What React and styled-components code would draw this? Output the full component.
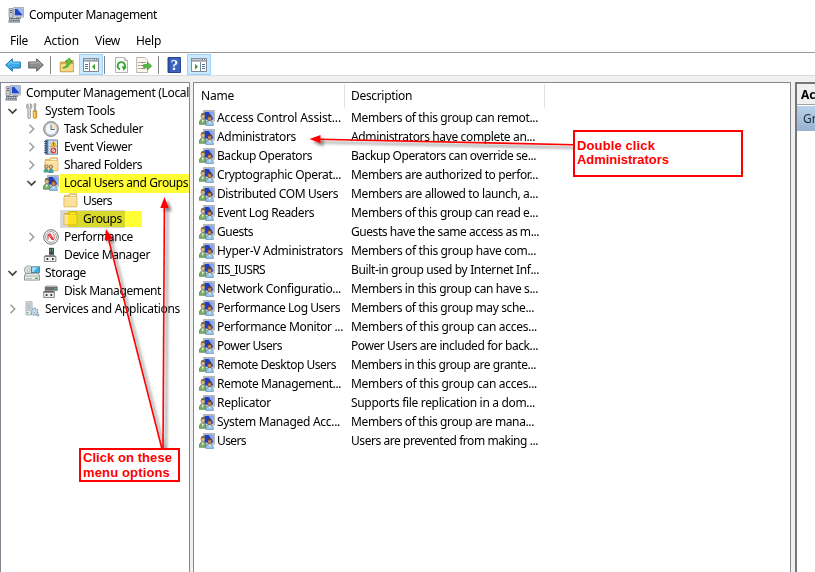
import React, { useLayoutEffect, useRef, useState } from 'react';
import styled, { createGlobalStyle } from 'styled-components';

const Global = createGlobalStyle`
  body { margin: 0; background: #fff; overflow: hidden; }
  * { box-sizing: border-box; }
`;

const Window = styled.div`
  position: relative;
  width: 815px;
  height: 572px;
  overflow: hidden;
  display: flex;
  flex-direction: column;
  background: #fff;
  color: #000;
  font: 12px/18px 'Noto Sans', 'Open Sans', sans-serif;
`;

const TitleBar = styled.header`
  display: flex;
  align-items: center;
  gap: 5px;
  height: 30px;
  padding-left: 8px;
`;

const MenuBar = styled.nav`
  display: flex;
  gap: 16px;
  height: 22px;
  padding: 2px 0 0 10px;
`;

const Toolbar = styled.div`
  display: flex;
  align-items: flex-start;
  height: 23px;
  padding: 1px 0 0 5px;
  border-top: 1px solid #9a9a9a;
`;

const Tool = styled.span`
  display: flex;
  align-items: flex-start;
  justify-content: center;
  flex: none;
  width: ${(p) => (p.$active ? 24 : 16)}px;
  height: 21px;
  padding-top: ${(p) => (p.$active ? 2 : 3)}px;
  margin-left: ${(p) => p.$gap || 0}px;
  background: ${(p) => (p.$active ? '#cce8ff' : 'transparent')};
  border: ${(p) => (p.$active ? '1px solid #99d1ff' : '0')};
`;

const Separator = styled.span`
  width: 1px;
  height: 18px;
  margin: 2px 0 0 ${(p) => p.$gap}px;
  background: #858585;
`;

const Workspace = styled.main`
  display: flex;
  flex: 1;
  min-height: 0;
  padding-top: 6px;
  background: #f0f0f0;
  border-top: 1px solid #dcdcdc;
`;

const TreePane = styled.section`
  width: 190px;
  flex: none;
  padding-top: 1px;
  overflow: hidden;
  background: #fff;
  border: 1px solid #828790;
  border-bottom: 0;
`;

const TreeRow = styled.div`
  display: flex;
  align-items: center;
  height: 18px;
  padding-left: ${(p) => p.$indent}px;
  white-space: nowrap;
  background: ${(p) => (p.$selected ? 'linear-gradient(#d9d9d9, #d9d9d9) 59px 0 / 65px 18px no-repeat' : 'none')};
`;

const Chevron = styled.span`
  display: flex;
  align-items: center;
  width: 17px;
  flex: none;
`;

const TreeLabel = styled.span`
  display: flex;
  align-items: center;
  height: 18px;
  margin-left: 5px;
`;

const ListPane = styled.section`
  width: 598px;
  flex: none;
  margin-left: 3px;
  background: #fff;
  border: 1px solid #828790;
  border-bottom: 0;
`;

const ListHeader = styled.div`
  display: grid;
  grid-template-columns: 151px 200px;
  height: 25px;
  padding-top: 1px;
`;

const HeaderCell = styled.div`
  display: flex;
  align-items: center;
  padding-left: ${(p) => p.$pad}px;
  border-right: 1px solid #e2e2e2;
`;

const ListRow = styled.div`
  display: grid;
  grid-template-columns: 18px 134px 200px;
  align-items: center;
  justify-items: start;
  height: 19px;
  padding-left: 5px;
  white-space: nowrap;
`;

const ActionsPane = styled.aside`
  flex: 1;
  min-width: 0;
  margin-left: 4px;
  overflow: hidden;
  background: #fff;
  border-top: 2px solid #767676;
  border-left: 2px solid #767676;
  white-space: nowrap;
`;

const ActionsTitle = styled.div`
  height: 21px;
  padding: 2px 0 0 4px;
  overflow: hidden;
  background: #f0f0f0;
  border-bottom: 1px solid #a0a0a0;
  font-weight: 700;
`;

const ActionsItem = styled.div`
  height: 25px;
  margin-top: 1px;
  padding: 4px 0 0 6px;
  overflow: hidden;
  color: #1e2a3c;
  background: linear-gradient(#b9d1ea, #98b1cf);
`;

const Highlight = styled.div`
  position: absolute;
  left: ${(p) => p.$x}px;
  top: ${(p) => p.$y}px;
  width: ${(p) => p.$w}px;
  height: ${(p) => p.$h}px;
  background: #ffff33;
  mix-blend-mode: multiply;
`;

const Arrows = styled.svg`
  position: absolute;
  left: 0;
  top: 0;
  pointer-events: none;
`;

const Callout = styled.div`
  position: absolute;
  left: ${(p) => p.$x}px;
  top: ${(p) => p.$y}px;
  width: ${(p) => p.$w}px;
  height: ${(p) => p.$h}px;
  padding: ${(p) => p.$pad};
  display: flex;
  flex-direction: column;
  align-items: flex-start;
  background: #fff;
  border: 2px solid #f00;
  color: #f00;
  font: bold 13px/${(p) => p.$line}px 'Liberation Sans', sans-serif;
  white-space: nowrap;
`;

const Run = styled.span`
  display: inline-block;
  white-space: pre;
`;

// Tracks the text so that it occupies exactly the given advance width.
function Fit({ w, children }) {
  const ref = useRef(null);
  const [spacing, setSpacing] = useState(0);
  useLayoutEffect(() => {
    const natural = ref.current.getBoundingClientRect().width;
    setSpacing((w - natural) / children.length);
  }, []);
  return <Run ref={ref} style={{ letterSpacing: spacing }}>{children}</Run>;
}

const Glyph = ({ children }) => (
  <svg width="16" height="16" viewBox="0 0 16 16">{children}</svg>
);

const ComputerIcon = () => (
  <Glyph>
    <path d="M5.5.5h10v9.6h-10z" fill="#d5d9df" stroke="#9aa1ab" strokeWidth=".8" />
    <path d="M6.8 1.8h7.5v6.6H6.8z" fill="#2346c8" />
    <path d="M9 1.8h5.3v6z" fill="#9dc0f7" />
    <path d="M1 1.5h3.8v9H1z" fill="#c5cad1" stroke="#868d97" strokeWidth=".7" />
    <path d="M2 3.5h2M2 5.5h2" stroke="#5d6570" />
    <path d="M8 10.2h5v1.8H8z" fill="#9299a3" />
    <path d="M1.2 11h10l.9 4.5H.3z" fill="#6b737e" />
    <path d="M1.8 12.5h9M1.3 14.2h10" stroke="#d6d9de" strokeDasharray="1.5 .8" />
  </Glyph>
);

const UsersIcon = () => (
  <Glyph>
    <path d="M4.4.5h11.1v10.8H4.4z" fill="#d0d0cc" stroke="#aaaaa4" strokeWidth=".8" />
    <path d="M5.5 1.8h8.7v7.8H5.5z" fill="#1c3dc8" />
    <path d="M9.5 1.8h4.7v7z" fill="#86a6ef" />
    <path d="M.3 14.3c-.1-3.6 1-5.2 3.3-5.2s3.5 1.6 3.4 5.2z" fill="#7bb06a" stroke="#3c6b34" strokeWidth=".6" />
    <path d="M2.6 9.4l1.2 3.4L5 9.4z" fill="#e8f3e2" />
    <ellipse cx="4" cy="6.3" rx="2" ry="2.6" fill="#dcb98c" stroke="#6c5a38" strokeWidth=".6" />
    <path d="M1.9 5.6C1.9 3 3.2 2.7 4.4 3c1.4 0 2 1.2 1.8 2.5C5 4.7 3 4.6 1.9 5.6z" fill="#7a673c" />
    <path d="M6.9 15.6c-.1-3.2 1.1-4.7 3.7-4.7s3.9 1.5 3.8 4.7z" fill="#9ac6ea" stroke="#4978a5" strokeWidth=".6" />
    <path d="M9.5 11l1.2 3 1.2-3z" fill="#f2f8fd" />
    <ellipse cx="10.6" cy="8.4" rx="2.1" ry="2.6" fill="#c18a5c" stroke="#5a3a20" strokeWidth=".6" />
    <path d="M8.5 7.7C8.4 5.4 9.7 5 10.8 5.2c1.4.1 2.1 1.1 1.9 2.4-1.2-.8-3-.8-4.2.1z" fill="#6a4225" />
  </Glyph>
);

const ToolsIcon = () => (
  <Glyph>
    <path d="M4 .8v3.5l1.2 1 1.2-1V.8c1.7.9 2.1 4-.1 5.6v8c0 1.5-2.3 1.5-2.3 0v-8C1.8 4.8 2.2 1.7 4 .8z" fill="#eceeef" stroke="#707678" strokeWidth=".8" />
    <path d="M10 .8h1.8l-.2 3.2v4h-1.3V4z" fill="#e3e6e8" stroke="#777d80" strokeWidth=".7" />
    <path d="M9.2 8h3.5v6.2c0 1.6-3.5 1.6-3.5 0z" fill="#f0ad13" stroke="#b97908" strokeWidth=".7" />
    <path d="M10.4 9v5.5" stroke="#ffe188" />
  </Glyph>
);

const ClockIcon = () => (
  <Glyph>
    <circle cx="8" cy="8" r="7.4" fill="#c6cacd" stroke="#74787b" strokeWidth=".9" />
    <circle cx="8" cy="8" r="5.9" fill="#f3f7fb" stroke="#9aa0a5" strokeWidth=".5" />
    <path d="M8 8V2.3A5.7 5.7 0 0 1 13.7 8z" fill="#f6e4b8" />
    <path d="M8 3.8V8.5h3.7" fill="none" stroke="#5a6c82" />
  </Glyph>
);

const EventIcon = () => (
  <Glyph>
    <path d="M2.5 1h12v14.2h-12z" fill="#d5e3f2" stroke="#6580a3" />
    <path d="M2.5 1h2.8v14.2H2.5z" fill="#5277ab" />
    <path d="M1 2.5h3M1 4.7h3M1 6.9h3M1 9.1h3M1 11.3h3M1 13.5h3" stroke="#2d4665" strokeWidth=".8" />
    <path d="M6.5 4h2M6.5 7h1M6.5 10h1M6.5 13h2" stroke="#7b98bd" strokeWidth=".8" />
    <path d="M10.6 2l3 5.5h-6z" fill="#ffd42a" stroke="#c28d0b" strokeWidth=".6" />
    <path d="M10.6 4v1.8M10.6 6.3v.6" stroke="#222" strokeWidth=".8" />
    <circle cx="10.4" cy="11.4" r="2.3" fill="#fbe6e3" stroke="#dd3b2e" strokeWidth="1.2" />
    <path d="M9 12.8l2.8-2.8" stroke="#dd3b2e" />
  </Glyph>
);

const FolderIcon = ({ shared }) => (
  <Glyph>
    <path d="M2.4 2.4h3.8l1.4-1.6h6.9v12.7H2.4z" fill="#eec568" stroke="#cfa349" strokeWidth=".7" />
    <path d="M8.3 1.8h5.2v1.6H8.3z" fill="#fffaea" />
    <path d="M2 3.9h13v10H2z" fill="#fbe29a" stroke="#d8ae52" strokeWidth=".7" />
    <path d="M2.5 4.6h12" stroke="#fff4cc" strokeWidth=".8" />
    {shared && (
      <g>
        <path d="M.6 15.6c0-2.8.8-4 2.5-4s2.5 1.2 2.5 4z" fill="#4ba38a" />
        <path d="M5.4 15.9c0-2.8.9-4.1 2.6-4.1s2.6 1.3 2.6 4.1z" fill="#3e9cae" />
        <circle cx="3.4" cy="9.6" r="1.7" fill="#e9c39c" stroke="#5b4a33" strokeWidth=".7" />
        <circle cx="7.9" cy="9.8" r="1.7" fill="#e9c39c" stroke="#5b4a33" strokeWidth=".7" />
      </g>
    )}
  </Glyph>
);

const GaugeIcon = () => (
  <Glyph>
    <circle cx="8" cy="8" r="7.3" fill="#f7f7f7" stroke="#747474" />
    <circle cx="8" cy="8" r="5.4" fill="#fff" stroke="#888" strokeWidth=".8" />
    <path d="M5 10.5V6l2-1.3 3.6 6.2M6 6.2l3.4 4.8" fill="none" stroke="#d3262b" strokeWidth="1.1" />
    <path d="M9.5 4.8l1.7 1.4v3.5" fill="none" stroke="#c33" strokeWidth=".8" />
  </Glyph>
);

const DeviceIcon = () => (
  <Glyph>
    <path d="M6 .8h5v7H6z" fill="#43474a" />
    <path d="M7.3 2v3" stroke="#7b8388" />
    <path d="M9.6 1.5v3" stroke="#35d15c" strokeWidth=".8" />
    <path d="M2.2 8h9.6l.9 2H1.3z" fill="#8b8f92" />
    <path d="M1.3 9.5h11.6v5H1.3z" fill="#eceded" stroke="#6b6f72" strokeWidth=".8" />
    <path d="M3.6 11h1.6v2H3.6zM9 11h1.6v2H9z" fill="#333" />
  </Glyph>
);

const DiskIcon = () => (
  <Glyph>
    <path d="M3 2.7h10.5l1.2 1.8v3.3H1.8V4.5z" fill="#6b6f72" />
    <path d="M3.2 3.3h10" stroke="#c5c9cc" />
    <path d="M11.4 5h2v1.2h-2z" fill="#35d15c" />
    <path d="M.7 8.7h10.6v5.8H.7z" fill="#eceded" stroke="#6b6f72" strokeWidth=".8" />
    <path d="M.7 8.2h10.6v1.4H.7z" fill="#55595c" />
    <path d="M2.8 11h1.6v2H2.8zM7.5 11h1.6v2H7.5z" fill="#333" />
  </Glyph>
);

const StorageIcon = () => (
  <Glyph>
    <circle cx="4.6" cy="5" r="4.1" fill="#d5e3dd" stroke="#859397" strokeWidth=".8" />
    <circle cx="4.6" cy="5" r="1.3" fill="#fff" stroke="#7b8a8e" strokeWidth=".5" />
    <path d="M7.5 1.8h8.1v5.8H7.5z" fill="#3faee0" stroke="#376d91" strokeWidth=".8" />
    <path d="M8 2.3h5.5L9.5 7H8z" fill="#a5ddf5" />
    <path d="M1.5 8.3h13l1 2.8v4H.5v-4z" fill="#eceded" stroke="#757c7e" strokeWidth=".8" />
    <path d="M1 11h14" stroke="#a6acae" />
    <path d="M11 12.6h3v1.4h-3z" fill="#36c43c" />
    <path d="M2 13.4h6" stroke="#b6bcbe" />
  </Glyph>
);

const ServicesIcon = () => (
  <Glyph>
    <path d="M2 .8h6v13H2z" fill="#e9eef0" stroke="#919ea5" strokeWidth=".8" />
    <path d="M3 3h4M3 5h4M3 7h4M3 9h3" stroke="#8b9ea9" />
    <path d="M3 11.7h1.6" stroke="#41a648" />
    <circle cx="10.3" cy="10.6" r="3.4" fill="#c6daea" stroke="#7c98ae" strokeWidth="1.4" strokeDasharray="1.6 1" />
    <circle cx="10.3" cy="10.6" r="2.7" fill="#c6daea" />
    <circle cx="10.3" cy="10.6" r="1.2" fill="#fff" stroke="#7c98ae" strokeWidth=".6" />
    <circle cx="13.9" cy="14" r="1.3" fill="#b0c8da" stroke="#7c98ae" strokeWidth=".5" />
  </Glyph>
);

const ArrowIcon = ({ back }) => (
  <Glyph>
    <path
      d={back ? 'M.7 8L7.3 1.8V5h8v6h-8v3.2z' : 'M15.3 8L8.7 1.8V5h-8v6h8v3.2z'}
      fill={back ? '#39ade9' : '#8b8d8e'}
      stroke={back ? '#1773ad' : '#5d5f60'}
      strokeLinejoin="round"
    />
    <path d={back ? 'M3 7.5l3.5-3.2V6h8' : 'M1.5 6h8V4.3L13 7.5'} fill="none" stroke={back ? '#8bd8fa' : '#b9bbbc'} />
  </Glyph>
);

const UpFolderIcon = () => (
  <Glyph>
    <path d="M1.3 5h4.5L7 3.5h7.3v11.2h-13z" fill="#e4b853" stroke="#b68c35" strokeWidth=".7" />
    <path d="M1.3 6.5h13.2v8.2H1.3z" fill="#f7d886" stroke="#c79d42" strokeWidth=".7" />
    <path d="M3.5 11C6.8 9.8 8 8 8.4 5L6 4.7 10.3 1l3 4.4-2.2-.2c-.4 3.8-3 6-7.6 5.8z" fill="#5cc83f" stroke="#2c851d" strokeWidth=".6" />
  </Glyph>
);

const PaneIcon = ({ right }) => (
  <Glyph>
    <path d="M.5 1.5h15v13H.5z" fill="#fff" stroke="#7e8994" />
    <path d="M0 1h16v4H0z" fill="#7e8994" />
    <path d="M1 2.4h10M1 4.2h14" stroke="#e8eef2" strokeWidth=".8" />
    <path d="M12 2.4h1M14 2.4h1" stroke="#fff" />
    <path d={right ? 'M9.5 5v9' : 'M6.5 5v9'} stroke="#7e8994" />
    <path d={right ? 'M11 7.5h3M11 9.5h3M11 11.5h3' : 'M2 7.5h3M2 9.5h3M2 11.5h3'} stroke="#4e7597" />
    <path d={right ? 'M4 6.8v6l3-3z' : 'M12 6.8v6l-3-3z'} fill="#34a52d" />
  </Glyph>
);

const RefreshIcon = () => (
  <Glyph>
    <path d="M1.5.5h9l3 3v12h-12z" fill="#fafafa" stroke="#a1a1a1" strokeWidth=".8" />
    <path d="M10.5.5v3h3" fill="#ddd" stroke="#a1a1a1" strokeWidth=".7" />
    <path d="M6 12.3a3.7 3.7 0 1 1 4.7-2" fill="none" stroke="#36a52d" strokeWidth="1.9" />
    <path d="M7.8 9l5 .9-3.2 3.8z" fill="#36a52d" />
  </Glyph>
);

const ExportIcon = () => (
  <Glyph>
    <path d="M.7.5h8l3 3v12h-11z" fill="#fdf8e7" stroke="#a1a1a1" strokeWidth=".8" />
    <path d="M2.5 5.5h1M2.5 8.5h1M2.5 11.5h1" stroke="#555" />
    <path d="M4.5 5.5h5M4.5 8.5h3M4.5 11.5h5" stroke="#8a8a8a" />
    <path d="M7.5 7.6h3.8V5l4.4 4-4.4 4v-2.6H7.5z" fill="#51bd3f" stroke="#308a23" strokeWidth=".6" />
  </Glyph>
);

const HelpText = styled.text`
  font: bold 15px 'Liberation Serif', serif;
  fill: #fff;
`;

const HelpIcon = () => (
  <Glyph>
    <path d="M2 .5h12.5v15H2z" fill="#3b63bd" stroke="#27458e" />
    <path d="M3 1v14" stroke="#26418a" />
    <HelpText x="4.8" y="13">?</HelpText>
  </Glyph>
);

const Twisty = ({ open }) => (
  <svg width="10" height="10" viewBox="0 0 10 10">
    <path
      d={open ? 'M1.5 3l4 4 4-4' : 'M3.5 .8L7.7 5 3.5 9.2'}
      fill="none"
      stroke={open ? '#404040' : '#a0a0a0'}
      strokeWidth="1.6"
    />
  </svg>
);

const tree = [
  { Icon: ComputerIcon, label: 'Computer Management (Local', w: 163, indent: 4, leaf: true },
  { Icon: ToolsIcon, label: 'System Tools', w: 70, indent: 6, open: true },
  { Icon: ClockIcon, label: 'Task Scheduler', w: 79, indent: 25 },
  { Icon: EventIcon, label: 'Event Viewer', w: 68, indent: 25 },
  { Icon: FolderIcon, shared: true, label: 'Shared Folders', w: 78, indent: 25 },
  { Icon: UsersIcon, label: 'Local Users and Groups', w: 124, indent: 25, open: true },
  { Icon: FolderIcon, label: 'Users', w: 29, indent: 61, leaf: true },
  { Icon: FolderIcon, label: 'Groups', w: 39, indent: 61, leaf: true, selected: true },
  { Icon: GaugeIcon, label: 'Performance', w: 69, indent: 25 },
  { Icon: DeviceIcon, label: 'Device Manager', w: 86, indent: 42, leaf: true },
  { Icon: StorageIcon, label: 'Storage', w: 41, indent: 6, open: true },
  { Icon: DiskIcon, label: 'Disk Management', w: 97, indent: 42, leaf: true },
  { Icon: ServicesIcon, label: 'Services and Applications', w: 135, indent: 6 },
];

const groups = [
  ['Access Control Assist...', 124, 'Members of this group can remot...', 187],
  ['Administrators', 79, 'Administrators have complete an...', 184],
  ['Backup Operators', 95, 'Backup Operators can override se...', 185],
  ['Cryptographic Operat...', 124, 'Members are authorized to perfor...', 187],
  ['Distributed COM Users', 121, 'Members are allowed to launch, a...', 187],
  ['Event Log Readers', 97, 'Members of this group can read e...', 187],
  ['Guests', 36, 'Guests have the same access as m...', 188],
  ['Hyper-V Administrators', 126, 'Members of this group have com...', 185],
  ['IIS_IUSRS', 48, 'Built-in group used by Internet Inf...', 188],
  ['Network Configuratio...', 124, 'Members in this group can have s...', 187],
  ['Performance Log Users', 123, 'Members of this group may sche...', 183],
  ['Performance Monitor ...', 126, 'Members of this group can acces...', 186],
  ['Power Users', 65, 'Power Users are included for back...', 187],
  ['Remote Desktop Users', 119, 'Members in this group are grante...', 185],
  ['Remote Management...', 124, 'Members of this group can acces...', 186],
  ['Replicator', 54, 'Supports file replication in a dom...', 184],
  ['System Managed Acc...', 123, 'Members of this group are mana...', 183],
  ['Users', 29, 'Users are prevented from making ...', 187],
];

export default function App() {
  return (
    <Window>
      <Global />
      <TitleBar>
        <ComputerIcon />
        <Fit w={128}>Computer Management</Fit>
      </TitleBar>
      <MenuBar>
        <Fit w={18}>File</Fit>
        <Fit w={35}>Action</Fit>
        <Fit w={25}>View</Fit>
        <Fit w={25}>Help</Fit>
      </MenuBar>
      <Toolbar>
        <Tool><ArrowIcon back /></Tool>
        <Tool $gap={7}><ArrowIcon /></Tool>
        <Separator $gap={6} />
        <Tool $gap={8}><UpFolderIcon /></Tool>
        <Tool $active $gap={4}><PaneIcon /></Tool>
        <Separator $gap={1} />
        <Tool $gap={9}><RefreshIcon /></Tool>
        <Tool $gap={6}><ExportIcon /></Tool>
        <Separator $gap={6} />
        <Tool $gap={7}><HelpIcon /></Tool>
        <Tool $active $gap={5}><PaneIcon right /></Tool>
      </Toolbar>
      <Workspace>
        <TreePane>
          {tree.map(({ Icon, label, w, indent, leaf, open, shared, selected }) => (
            <TreeRow key={label} $indent={indent} $selected={selected}>
              {!leaf && <Chevron><Twisty open={open} /></Chevron>}
              <Icon shared={shared} />
              <TreeLabel><Fit w={w}>{label}</Fit></TreeLabel>
            </TreeRow>
          ))}
        </TreePane>
        <ListPane>
          <ListHeader>
            <HeaderCell $pad={7}><Fit w={33}>Name</Fit></HeaderCell>
            <HeaderCell $pad={6}><Fit w={61}>Description</Fit></HeaderCell>
          </ListHeader>
          {groups.map(([name, nameW, text, textW]) => (
            <ListRow key={name}>
              <UsersIcon />
              <Fit w={nameW}>{name}</Fit>
              <Fit w={textW}>{text}</Fit>
            </ListRow>
          ))}
        </ListPane>
        <ActionsPane>
          <ActionsTitle>Actions</ActionsTitle>
          <ActionsItem>Groups</ActionsItem>
        </ActionsPane>
      </Workspace>

      <Highlight $x={60} $y={174} $w={129} $h={19} />
      <Highlight $x={68} $y={211} $w={74} $h={16} />

      <Arrows width="815" height="572">
        <defs>
          <filter id="shadow" x="0" y="0" width="815" height="572" filterUnits="userSpaceOnUse">
            <feDropShadow dx="3" dy="3" stdDeviation="1.5" floodColor="#000" floodOpacity=".5" />
          </filter>
        </defs>
        <g filter="url(#shadow)" stroke="#f00" strokeWidth="1.6" fill="#f00">
          <path d="M574 144.7L318 139.2" />
          <path d="M309.5 139l11-4v8.2z" stroke="none" />
          <path d="M163 449L164.4 205" />
          <path d="M164.5 197l4.2 11h-8.4z" stroke="none" />
          <path d="M162 449L108 237" />
          <path d="M106 229l6.6 9.6-8 2z" stroke="none" />
        </g>
      </Arrows>
      <Callout $x={573} $y={130} $w={170} $h={47} $line={14} $pad="7px 0 0 2px">
        <Fit w={78}>Double click</Fit>
        <Fit w={92}>Administrators</Fit>
      </Callout>
      <Callout $x={79} $y={448} $w={101} $h={34} $line={15} $pad="0 0 0 2px">
        <Fit w={89}>Click on these</Fit>
        <Fit w={87}>menu options</Fit>
      </Callout>
    </Window>
  );
}
